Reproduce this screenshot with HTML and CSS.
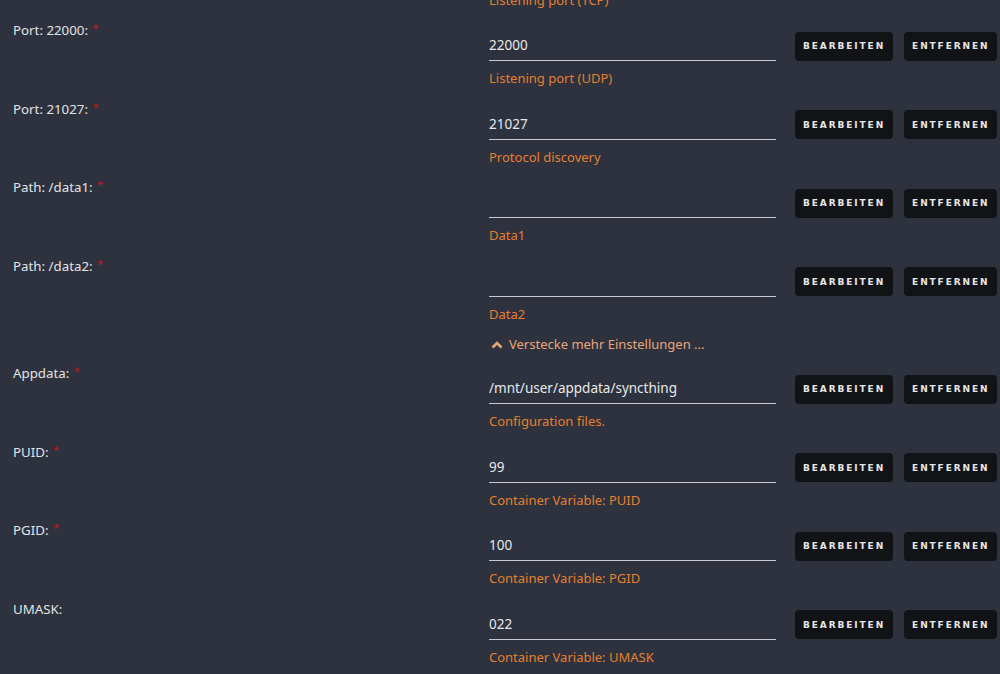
FILE: index.html
```html
<!DOCTYPE html>
<html lang="de">
<head>
    <meta charset="UTF-8">
    <meta name="viewport" content="width=device-width, initial-scale=1.0">
    <title>Container bearbeiten</title>
    <link rel="stylesheet" href="styles.css">
</head>
<body>
    <div id="config">
        <div class="desc lead">Listening port (TCP)</div>

        <div class="row">
            <div class="label">Port: 22000: <span class="req">*</span></div>
            <div class="field">
                <div class="line">
                    <div class="input">22000</div>
                    <button class="btn">Bearbeiten</button>
                    <button class="btn">Entfernen</button>
                </div>
                <div class="desc">Listening port (UDP)</div>
            </div>
        </div>

        <div class="row">
            <div class="label">Port: 21027: <span class="req">*</span></div>
            <div class="field">
                <div class="line">
                    <div class="input">21027</div>
                    <button class="btn">Bearbeiten</button>
                    <button class="btn">Entfernen</button>
                </div>
                <div class="desc">Protocol discovery</div>
            </div>
        </div>

        <div class="row">
            <div class="label">Path: /data1: <span class="req">*</span></div>
            <div class="field">
                <div class="line">
                    <div class="input"></div>
                    <button class="btn">Bearbeiten</button>
                    <button class="btn">Entfernen</button>
                </div>
                <div class="desc">Data1</div>
            </div>
        </div>

        <div class="row">
            <div class="label">Path: /data2: <span class="req">*</span></div>
            <div class="field">
                <div class="line">
                    <div class="input"></div>
                    <button class="btn">Bearbeiten</button>
                    <button class="btn">Entfernen</button>
                </div>
                <div class="desc">Data2</div>
            </div>
        </div>

        <div class="toggle">
            <svg width="12" height="9" viewBox="0 0 12 9"><path d="M1.5 7.5 L6 3 L10.5 7.5" fill="none" stroke="currentColor" stroke-width="2.6"/></svg>
            Verstecke mehr Einstellungen ...
        </div>

        <div class="row">
            <div class="label">Appdata: <span class="req">*</span></div>
            <div class="field">
                <div class="line">
                    <div class="input">/mnt/user/appdata/syncthing</div>
                    <button class="btn">Bearbeiten</button>
                    <button class="btn">Entfernen</button>
                </div>
                <div class="desc">Configuration files.</div>
            </div>
        </div>

        <div class="row">
            <div class="label">PUID: <span class="req">*</span></div>
            <div class="field">
                <div class="line">
                    <div class="input">99</div>
                    <button class="btn">Bearbeiten</button>
                    <button class="btn">Entfernen</button>
                </div>
                <div class="desc">Container Variable: PUID</div>
            </div>
        </div>

        <div class="row">
            <div class="label">PGID: <span class="req">*</span></div>
            <div class="field">
                <div class="line">
                    <div class="input">100</div>
                    <button class="btn">Bearbeiten</button>
                    <button class="btn">Entfernen</button>
                </div>
                <div class="desc">Container Variable: PGID</div>
            </div>
        </div>

        <div class="row">
            <div class="label">UMASK:</div>
            <div class="field">
                <div class="line">
                    <div class="input">022</div>
                    <button class="btn">Bearbeiten</button>
                    <button class="btn">Entfernen</button>
                </div>
                <div class="desc">Container Variable: UMASK</div>
            </div>
        </div>
    </div>
</body>
</html>
```

FILE: styles.css
```css
body {
    margin: 0;
    background-color: #2d323e;
    color: #e2e3e5;
    font-family: "Noto Sans", sans-serif;
    font-size: 13px;
    overflow: hidden;
}
#config {
    display: flex;
    flex-direction: column;
}
.row {
    display: grid;
    grid-template-columns: 489px 1fr;
}
.label {
    padding-left: 13px;
    line-height: 18px;
    font-size: 13.3px;
}
.req {
    color: #c4161c;
    font-size: 11px;
    vertical-align: top;
    position: relative;
    top: -2px;
    margin-left: 1px;
}
.line {
    display: flex;
    align-items: center;
    margin-top: 10px;
    height: 30px;
}
.input {
    width: 287px;
    height: 29px;
    line-height: 29px;
    border-bottom: 1px solid #c8cacf;
    font-size: 13.5px;
    color: #e8e9eb;
}
.btn {
    height: 29px;
    margin-left: 11px;
    padding: 0 8px;
    background-color: #121317;
    color: #e6e6e6;
    border: none;
    border-radius: 4px;
    font-family: "DejaVu Sans", sans-serif;
    font-weight: bold;
    font-size: 9px;
    letter-spacing: 1.9px;
    text-transform: uppercase;
    cursor: pointer;
}
.input + .btn {
    margin-left: 19px;
}
.desc {
    margin-top: 8px;
    margin-bottom: 12.5px;
    line-height: 18px;
    color: #e57f2f;
}
.desc.lead {
    margin-top: -9.5px;
    margin-left: 489px;
}
.toggle {
    margin-left: 489px;
    margin-bottom: 11px;
    line-height: 18px;
    color: #e8a679;
    display: flex;
    align-items: center;
    gap: 6px;
}
.toggle svg {
    margin-left: 2px;
}
```
